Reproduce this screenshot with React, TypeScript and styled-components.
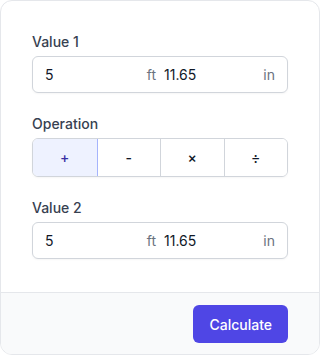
import React from 'react'
import styled, { createGlobalStyle } from 'styled-components'

const GlobalStyle = createGlobalStyle`
  html, body {
    margin: 0;
    padding: 0;
    background: #ffffff;
  }
  body {
    font-family: Inter, "Liberation Sans", sans-serif;
    -webkit-font-smoothing: antialiased;
  }
`

interface Length {
  feet: string
  inches: string
}

const OPERATIONS = ['+', '-', '×', '÷']

export default function App() {
  const value1: Length = { feet: '5', inches: '11.65' }
  const value2: Length = { feet: '5', inches: '11.65' }
  const selected = 0

  return (
    <>
      <GlobalStyle />
      <Card>
        <Body>
          <Field>
            <Label>Value 1</Label>
            <LengthInput value={value1} />
          </Field>
          <Field>
            <Label>Operation</Label>
            <Segments>
              {OPERATIONS.map((op, i) => (
                <Segment key={op} $active={i === selected}>
                  {op}
                </Segment>
              ))}
            </Segments>
          </Field>
          <Field>
            <Label>Value 2</Label>
            <LengthInput value={value2} />
          </Field>
        </Body>
        <Footer>
          <PrimaryButton>Calculate</PrimaryButton>
        </Footer>
      </Card>
    </>
  )
}

const LengthInput = ({ value }: { value: Length }) => (
  <InputBox>
    <InputPart>
      <InputValue>{value.feet}</InputValue>
      <Unit>ft</Unit>
    </InputPart>
    <InputPart>
      <InputValue>{value.inches}</InputValue>
      <Unit>in</Unit>
    </InputPart>
  </InputBox>
)

const Card = styled.div`
  width: 320px;
  height: 355px;
  box-sizing: border-box;
  border: 1px solid #e5e7eb;
  border-radius: 12px;
  overflow: hidden;
  background: #ffffff;
  display: flex;
  flex-direction: column;
`

const Body = styled.div`
  flex: 1;
  padding: 31px 31px 0;
  display: flex;
  flex-direction: column;
  row-gap: 21px;
`

const Field = styled.div`
  display: flex;
  flex-direction: column;
  row-gap: 4px;
`

const Label = styled.div`
  font-size: 14px;
  line-height: 20px;
  font-weight: 500;
  color: #374151;
`

const InputBox = styled.div`
  height: 37px;
  box-sizing: border-box;
  border: 1px solid #d1d5db;
  border-radius: 6px;
  padding: 0 12px;
  display: grid;
  grid-template-columns: 1fr 1fr;
  column-gap: 8px;
  align-items: center;
  box-shadow: 0 1px 2px rgba(0, 0, 0, 0.04);
`

const InputPart = styled.div`
  display: flex;
  align-items: center;
  font-size: 14px;
  line-height: 20px;
`

const InputValue = styled.span`
  flex: 1;
  color: #111827;
`

const Unit = styled.span`
  color: #6b7280;
`

const Segments = styled.div`
  height: 39px;
  box-sizing: border-box;
  display: grid;
  grid-template-columns: repeat(4, 1fr);
  border: 1px solid #d1d5db;
  border-radius: 6px;
  overflow: hidden;
  box-shadow: 0 1px 2px rgba(0, 0, 0, 0.04);
`

const Segment = styled.button<{ $active?: boolean }>`
  border: none;
  border-left: 1px solid ${({ $active }) => ($active ? '#a5b4fc' : '#d1d5db')};
  background: ${({ $active }) => ($active ? '#eef2ff' : '#ffffff')};
  color: ${({ $active }) => ($active ? '#3730a3' : '#111827')};
  font-family: Inter, "Liberation Sans", sans-serif;
  font-size: 14px;
  font-weight: 500;
  padding: 0;
  display: flex;
  align-items: center;
  justify-content: center;

  &:first-child {
    border-left: none;
    border-right: 1px solid #a5b4fc;
    margin-right: -1px;
    position: relative;
    z-index: 1;
  }
`

const Footer = styled.div`
  border-top: 1px solid #e5e7eb;
  background: #f9fafb;
  padding: 12px 31px 11px;
  display: flex;
  justify-content: flex-end;
`

const PrimaryButton = styled.button`
  height: 38px;
  padding: 0 16px;
  border: none;
  border-radius: 6px;
  background: #4f46e5;
  color: #ffffff;
  font-family: Inter, "Liberation Sans", sans-serif;
  font-size: 14px;
  font-weight: 500;
`
